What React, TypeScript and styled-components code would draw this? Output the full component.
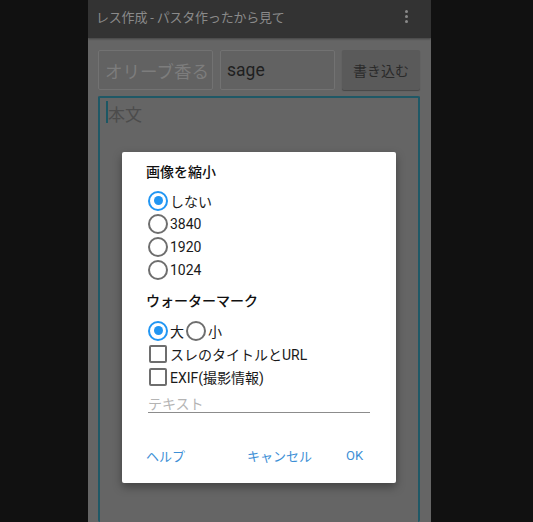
import React from "react";
import styled, { createGlobalStyle } from "styled-components";

const Global = createGlobalStyle`
  html, body { margin: 0; padding: 0; background: #111111; }
  body { font-family: Roboto, "Noto Sans CJK JP", "Noto Sans", sans-serif; }
  #root { width: 533px; height: 522px; overflow: hidden; }
`;

const Stage = styled.div`
  width: 533px;
  height: 522px;
  display: flex;
  justify-content: flex-start;
  background: #111111;
  padding-left: 88px;
  box-sizing: border-box;
`;

const Screen = styled.div`
  position: relative;
  width: 343px;
  height: 522px;
  background: #656565;
  display: flex;
  flex-direction: column;
  overflow: hidden;
`;

const TopBar = styled.div`
  height: 38px;
  background: #333333;
  display: flex;
  align-items: center;
  justify-content: space-between;
  padding: 0 23px 0 8px;
  box-shadow: 0 1px 2px rgba(0,0,0,0.35);
`;

const Title = styled.div`
  color: #8a8a8a;
  font-size: 13px;
  letter-spacing: -0.2px;
  margin-top: -6px;
`;

const Dots = styled.div`
  display: flex;
  flex-direction: column;
  gap: 2px;
  margin-top: -6px;
  span { width: 3px; height: 3px; border-radius: 50%; background: #8a8a8a; display: block; }
`;

const Body = styled.div`
  flex: 1;
  padding: 12px 11px 0 10px;
  display: flex;
  flex-direction: column;
  gap: 6px;
`;

const InputRow = styled.div`
  display: flex;
  gap: 7px;
  height: 40px;
`;

const Field = styled.div<{ $w: number; $dim?: boolean }>`
  width: ${(p) => p.$w}px;
  box-sizing: border-box;
  border: 1px solid #727272;
  border-radius: 2px;
  background: #626262;
  display: flex;
  align-items: center;
  padding-left: 6px;
  font-size: 17.5px;
  color: ${(p) => (p.$dim ? "#7d7d7d" : "#1f1f1f")};
`;

const Btn = styled.div`
  flex: 1;
  background: #5a5a5a;
  border-radius: 2px;
  display: flex;
  align-items: center;
  justify-content: center;
  font-size: 14px;
  color: #2a2a2a;
  box-shadow: 0 1px 1px rgba(0,0,0,0.3);
`;

const TextArea = styled.div`
  flex: 1;
  border: 2px solid #1f5866;
  border-bottom: none;
  border-radius: 2px;
  padding: 3px 6px;
  font-size: 17px;
  color: #4c4c4c;
  display: flex;
  align-items: flex-start;
`;

const Caret = styled.span`
  width: 2px;
  height: 22px;
  background: #1c5764;
  display: inline-block;
`;

const Dialog = styled.div`
  position: absolute;
  left: 34px;
  top: 152px;
  width: 274px;
  height: 331px;
  background: #ffffff;
  border-radius: 2px;
  box-shadow: 0 4px 10px rgba(0,0,0,0.35);
  box-sizing: border-box;
  padding: 10px 24px 0 24px;
  display: flex;
  flex-direction: column;
`;

const DTitle = styled.div<{ $mt?: number; $mb?: number }>`
  font-size: 14px;
  font-weight: 500;
  color: #111;
  height: 20px;
  line-height: 20px;
  margin-top: ${(p) => p.$mt ?? 0}px;
  margin-bottom: ${(p) => p.$mb ?? 7}px;
`;

const OptRow = styled.div`
  display: flex;
  align-items: center;
  height: 23px;
  font-size: 14px;
  color: #1a1a1a;
`;

const RadioBox = styled.span<{ $on?: boolean }>`
  width: 16px;
  height: 16px;
  border-radius: 50%;
  border: 2px solid ${(p) => (p.$on ? "#2196f3" : "#6e6e6e")};
  display: inline-flex;
  align-items: center;
  justify-content: center;
  margin: 0 2px 0 2px;
  flex-shrink: 0;
  &::after {
    content: "";
    width: 9px;
    height: 9px;
    border-radius: 50%;
    background: ${(p) => (p.$on ? "#2196f3" : "transparent")};
  }
`;

const CheckBox = styled.span`
  width: 14px;
  height: 14px;
  border: 2px solid #6e6e6e;
  border-radius: 2px;
  margin: 0 3px 0 3px;
  flex-shrink: 0;
`;

const TextInput = styled.div`
  margin: 9px 2px 0 2px;
  border-bottom: 1px solid #8c8c8c;
  font-size: 14px;
  color: #b4b4b4;
  height: 15px;
  line-height: 15px;
`;

const Actions = styled.div`
  margin-top: auto;
  margin-bottom: 18px;
  display: flex;
  align-items: center;
  font-size: 13px;
  color: #3d8fd6;
`;

const Action = styled.div<{ $ml?: number }>`
  margin-left: ${(p) => p.$ml ?? 0}px;
`;

export default function App() {
  return (
    <>
      <Global />
      <Stage>
        <Screen>
          <TopBar>
            <Title>レス作成 - パスタ作ったから見て</Title>
            <Dots>
              <span />
              <span />
              <span />
            </Dots>
          </TopBar>
          <Body>
            <InputRow>
              <Field $w={115} $dim>オリーブ香る</Field>
              <Field $w={115}>sage</Field>
              <Btn>書き込む</Btn>
            </InputRow>
            <TextArea>
              <Caret />
              本文
            </TextArea>
          </Body>
          <Dialog>
            <DTitle>画像を縮小</DTitle>
            <OptRow><RadioBox $on />しない</OptRow>
            <OptRow><RadioBox />3840</OptRow>
            <OptRow><RadioBox />1920</OptRow>
            <OptRow><RadioBox />1024</OptRow>
            <DTitle $mt={10} $mb={8}>ウォーターマーク</DTitle>
            <OptRow><RadioBox $on />大<RadioBox />小</OptRow>
            <OptRow><CheckBox />スレのタイトルとURL</OptRow>
            <OptRow><CheckBox />EXIF(撮影情報)</OptRow>
            <TextInput>テキスト</TextInput>
            <Actions>
              <Action>ヘルプ</Action>
              <Action $ml={62}>キャンセル</Action>
              <Action $ml={34}>OK</Action>
            </Actions>
          </Dialog>
        </Screen>
      </Stage>
    </>
  );
}
